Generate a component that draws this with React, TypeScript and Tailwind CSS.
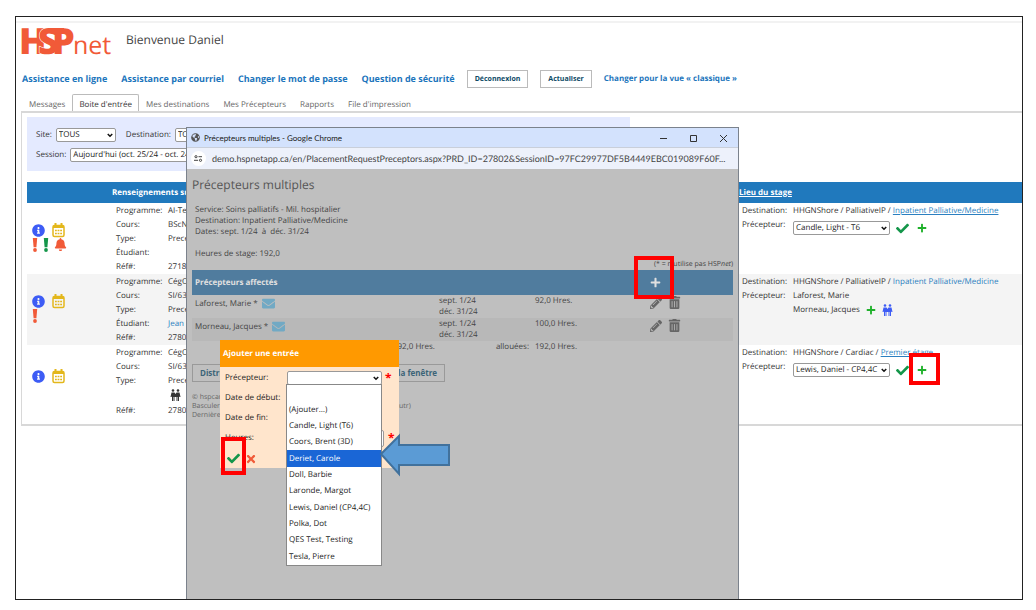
import React from 'react';
import { FaCheck, FaPlus, FaEnvelope, FaBell, FaTimes, FaInfoCircle, FaPencilAlt, FaTrashAlt, FaGlobeAmericas } from 'react-icons/fa';

const OPTIONS = [
  '',
  '(Ajouter…)',
  'Candle, Light (T6)',
  'Coors, Brent (3D)',
  'Deriet, Carole',
  'Doll, Barbie',
  'Laronde, Margot',
  'Lewis, Daniel (CP4,4C)',
  'Polka, Dot',
  'QES Test, Testing',
  'Tesla, Pierre',
];

const Logo = () => (
  <svg width="92" height="32" viewBox="0 0 92 32" role="img" aria-label="HSPnet" fill="#f15a38" className="shrink-0 overflow-visible">
    <g fontFamily="Open Sans, sans-serif" fontWeight="800" fontSize="36">
      <text x="-3" y="28">H</text>
      <text x="16" y="28" stroke="#fff" strokeWidth="1" paintOrder="stroke">S</text>
      <text x="30" y="28">P</text>
    </g>
    <rect x="26" y="2" width="16" height="5" />
    <text x="51" y="28" fontFamily="Open Sans, sans-serif" fontSize="25">net</text>
  </svg>
);

const People = ({ className = '' }: { className?: string }) => (
  <svg viewBox="0 0 20 24" className={className} fill="currentColor" aria-hidden="true">
    <circle cx="5" cy="3" r="2.6" />
    <circle cx="15" cy="3" r="2.6" />
    <path d="M2 7h6l2 3 2-3h6l2 9h-2.4l-.6-3v11h-2v-8h-1v8h-2v-8h-4v8H6v-8H5v8H3V13l-.6 3H0z" />
  </svg>
);

const Calendar = () => (
  <svg width="13" height="15" viewBox="0 0 13 15" fill="none" stroke="#e3b71b" aria-hidden="true">
    <rect x="1" y="2.5" width="11" height="11" rx="1.5" strokeWidth="1.5" />
    <path d="M3.5 0v3M9.5 0v3" strokeWidth="2" />
    <path d="M1 4h11" strokeWidth="2" />
    <path d="M3 7.5h7M3 10.5h7" strokeWidth="1.5" strokeDasharray="1.8 .8" />
  </svg>
);

const Exclaim = ({ className }: { className: string }) => (
  <svg width="6" height="14" viewBox="0 0 6 14" fill="currentColor" className={className} aria-hidden="true">
    <path d="M.8 0h4.4l-.8 9.2H1.6z" />
    <circle cx="3" cy="12" r="1.9" />
  </svg>
);

const Select = ({ id, label, value, className = '', hideLabel = false }: { id: string; label: string; value: string; className?: string; hideLabel?: boolean }) => (
  <>
    {!hideLabel && <label htmlFor={id} className="shrink-0">{label}</label>}
    <span className={`relative inline-block shrink-0 ${className}`}>
      <select id={id} aria-label={label} defaultValue={value} className="block h-[14px] w-full appearance-none rounded-xs border border-[#999] bg-white pl-[2px] text-[8px] leading-[12px] text-[#222] [text-rendering:geometricPrecision]">
        <option>{value}</option>
      </select>
      <svg viewBox="0 0 8 6" className="pointer-events-none absolute top-[5px] right-[3px] h-[5px] w-[6px]" fill="none" stroke="#111" strokeWidth="2">
        <path d="M1 1l3 3 3-3" />
      </svg>
    </span>
  </>
);

const InfoCell = ({ programme, cours, etudiant, refNo, people }: { programme: string; cours: string; etudiant?: string; refNo: string; people?: boolean }) => (
  <dl className="grid grid-cols-[52px_1fr] pt-px pl-1 leading-[14px]">
    <dt>Programme:</dt><dd>{programme}</dd>
    <dt>Cours:</dt><dd>{cours}</dd>
    <dt>Type:</dt><dd>Preceptorat</dd>
    {people ? (
      <dt className="col-span-2 h-4 pt-px pl-[54px]"><People className="h-3 w-[11px] text-[#333]" /></dt>
    ) : (
      <><dt>Étudiant:</dt><dd className="text-[#2b7fc0]">{etudiant}</dd></>
    )}
    <dt>Réf#:</dt><dd>{refNo}</dd>
  </dl>
);

const PlaceLine = ({ path, link, underline }: { path: string; link: string; underline?: boolean }) => (
  <>
    <span>Destination:</span>
    <span className="whitespace-nowrap">{path} <a href="#dest" className={`text-[#2b7fc0] ${underline ? 'underline' : ''}`}>{link}</a></span>
  </>
);

const PreceptorSelect = ({ id, value }: { id: string; value: string }) => (
  <div className="flex items-center gap-[6px] pt-[3px]">
    <Select id={id} label="Précepteur" value={value} className="w-[97px]" hideLabel />
    <button aria-label="Confirmer"><FaCheck className="size-[13px] text-[#14964a]" /></button>
    <button aria-label="Ajouter" className="pl-[2px]"><FaPlus className="size-[10px] text-[#1fb12b]" /></button>
  </div>
);

const LINKS = ['Assistance en ligne', 'Assistance par courriel', 'Changer le mot de passe', 'Question de sécurité'];
const TABS = ['Messages', "Boite d'entrée", 'Mes destinations', 'Mes Précepteurs', 'Rapports', "File d'impression"];

const Inbox = () => (
  <table className="mt-[11px] w-full table-fixed border-collapse text-left">
    <colgroup>
      <col className="w-[85px]" />
      <col />
      <col className="w-[283px]" />
    </colgroup>
    <thead>
      <tr className="h-[21px] bg-[#2079bd] text-white">
        <th aria-label="État" />
        <th className="font-bold">Renseignements sur le stage</th>
        <th className="font-bold underline">Lieu du stage</th>
      </tr>
    </thead>
    <tbody className="align-top">
      <tr className="h-[71px]">
        <td className="pt-5 pl-[5px]">
          <div className="flex items-center gap-[7px]"><FaInfoCircle className="size-[13px] text-[#3d5cf5]" /><Calendar /></div>
          <div className="flex gap-[5px]"><Exclaim className="text-[#f15a38]" /><Exclaim className="text-[#14964a]" /><FaBell className="size-[13px] text-[#f15a38]" /></div>
        </td>
        <td><InfoCell programme="AI-Test" cours="BScN 400" refNo="27180" /></td>
        <td>
          <div className="grid grid-cols-[51px_1fr] pt-px pl-[3px] leading-[14px]">
            <PlaceLine path="HHGNShore / PalliativeIP /" link="Inpatient Palliative/Medicine" underline />
            <span>Précepteur:</span>
            <PreceptorSelect id="prec-1" value="Candle, Light - T6" />
          </div>
        </td>
      </tr>
      <tr className="h-[71px] bg-[#f4f4f4]">
        <td className="pt-5 pl-[5px]">
          <div className="flex items-center gap-[7px]"><FaInfoCircle className="size-[13px] text-[#3d5cf5]" /><Calendar /></div>
          <Exclaim className="text-[#f15a38]" />
        </td>
        <td><InfoCell programme="CégOutaouais" cours="SI/63A" etudiant="Jean Untel" refNo="27802" /></td>
        <td>
          <div className="grid grid-cols-[51px_1fr] pt-px pl-[3px] leading-[14px]">
            <PlaceLine path="HHGNShore / PalliativeIP /" link="Inpatient Palliative/Medicine" />
            <span>Précepteur:</span><span>Laforest, Marie</span>
            <div className="col-start-2 flex items-center gap-[6px]">
              Morneau, Jacques
              <button aria-label="Ajouter"><FaPlus className="size-[10px] text-[#1fb12b]" /></button>
              <People className="h-3 w-[11px] text-[#3d5cf5]" />
            </div>
          </div>
        </td>
      </tr>
      <tr className="h-[71px]">
        <td className="pt-6 pl-[5px]">
          <div className="flex items-center gap-[7px]"><FaInfoCircle className="size-[13px] text-[#3d5cf5]" /><Calendar /></div>
        </td>
        <td><InfoCell programme="CégOutaouais" cours="SI/63A" refNo="27803" people /></td>
        <td>
          <div className="grid grid-cols-[51px_1fr] pt-px pl-[3px] leading-[14px]">
            <PlaceLine path="HHGNShore / Cardiac /" link="Premier étage" underline />
            <span>Précepteur:</span>
            <PreceptorSelect id="prec-3" value="Lewis, Daniel - CP4,4C" />
          </div>
        </td>
      </tr>
    </tbody>
  </table>
);

const AddEntry = () => (
  <form className="absolute top-[171px] left-[33px] h-[128px] w-[179px] bg-[#ffe5cc] text-[#222]">
    <h2 className="bg-[#ff9900] pl-[3px] font-bold leading-[27px] text-white">Ajouter une entrée</h2>
    <div className="grid grid-cols-[62px_1fr] items-center pt-px pl-[5px] leading-[20px]">
      <label htmlFor="add-prec">Précepteur:</label>
      <div className="flex items-center gap-[3px]">
        <Select id="add-prec" label="Précepteur" value="" className="w-[95px]" hideLabel />
        <span className="text-xs font-bold text-[#f00]">*</span>
      </div>
      <span className="col-span-2">Date de début:</span>
      <span className="col-span-2">Date de fin:</span>
      <label htmlFor="add-hours">Heures:</label>
      <div className="flex items-center gap-[4px]">
        <input id="add-hours" className="h-[17px] w-[97px] rounded-xs border border-[#999] bg-white" />
        <span className="text-xs font-bold text-[#f00]">*</span>
      </div>
    </div>
    <div className="flex items-center gap-[5px] pt-1 pl-[7px]">
      <button type="button" aria-label="Confirmer"><FaCheck className="size-[13px] text-[#14964a]" /></button>
      <button type="button" aria-label="Annuler"><FaTimes className="size-[12px] text-[#f15a38]" /></button>
    </div>
    <ul role="listbox" aria-label="Précepteur" className="absolute top-[44px] left-[66px] flex h-[182px] w-[96px] flex-col border border-[#888] bg-white">
      {OPTIONS.map(name => (
        <li
          key={name}
          role="option"
          aria-selected={name === 'Deriet, Carole'}
          className="flex flex-1 items-center pl-[2px] whitespace-nowrap aria-selected:bg-[#1a66d6] aria-selected:text-white"
        >
          {name}
        </li>
      ))}
    </ul>
  </form>
);

const ROWS = [
  { name: 'Laforest, Marie *', hours: '92,0 Hres.' },
  { name: 'Morneau, Jacques *', hours: '100,0 Hres.' },
];

const Popup = () => (
  <section className="absolute top-[110px] bottom-0 left-[170px] flex w-[553px] flex-col border border-b-0 border-[#7b828c] bg-[#bfbfbf]">
    <header className="flex h-5 shrink-0 items-center border-b border-[#c9cfda] bg-[#d3e2fd] pl-1">
      <FaGlobeAmericas className="mr-1 size-[9px] text-[#555]" />
      <span className="flex-1 font-[Lato,sans-serif] text-[8px] text-[#222]">Précepteurs multiples - Google Chrome</span>
      <svg width="80" height="10" viewBox="0 0 80 10" fill="none" stroke="#333" className="mr-[5px]" aria-hidden="true">
        <path d="M7 5.5h7M37.500 2.500h6v6h-6zM67 2l7 7M74 2l-7 7" />
      </svg>
    </header>
    <div className="flex h-[21px] shrink-0 items-center gap-[6px] bg-[#edf1fb] pl-1 text-[#444]">
      <span className="flex size-[15px] items-center justify-center rounded-full bg-white">
        <svg width="9" height="7" viewBox="0 0 9 7" fill="none" stroke="#444" aria-hidden="true">
          <circle cx="2" cy="1.700" r="1.100" /><path d="M4.500 1.700h3.500M0 5.300h4" /><circle cx="6.500" cy="5.300" r="1.100" />
        </svg>
      </span>
      <span className="font-[Lato,sans-serif] text-[9px] whitespace-nowrap">demo.hspnetapp.ca/en/PlacementRequestPreceptors.aspx?PRD_ID=27802&amp;SessionID=97FC29977DF5B4449EBC019089F60F...</span>
    </div>
    <div className="relative flex-1 pt-[7px] pr-[5px] pl-[5px] text-[#444]">
      <h1 className="text-xs leading-[18px] text-[#555]">Précepteurs multiples</h1>
      <div className="pt-[10px] pl-[3px] leading-[11px]">
        <p>Service: Soins palliatifs - Mil. hospitalier</p>
        <p>Destination: Inpatient Palliative/Medicine</p>
        <p className="whitespace-pre">Dates: sept. 1/24  à  déc. 31/24</p>
        <p className="pt-[11px]">Heures de stage: 192,0</p>
      </div>
      <p className="text-right text-[7px] leading-[11px]">(* = n'utilise pas HSP<i>net</i>)</p>
      <table className="w-full table-fixed border-collapse text-left">
        <colgroup>
          <col />
          <col className="w-[96px]" />
          <col className="w-[112px]" />
          <col className="w-[86px]" />
        </colgroup>
        <thead>
          <tr className="h-[25px] bg-[#507c9e] text-[#e0e0e0]">
            <th colSpan={3} className="pl-[3px] font-bold">Précepteurs affectés</th>
            <th className="pl-[3px]"><button aria-label="Ajouter" className="block"><FaPlus className="size-[11px]" /></button></th>
          </tr>
        </thead>
        <tbody className="align-top leading-[11px]">
          {ROWS.map(row => (
            <tr key={row.name} className="h-[23px] even:bg-[#b8b8b8]">
              <td className="pt-[2px] pl-[3px]">
                <span className="flex items-center gap-1">{row.name} <FaEnvelope className="size-[13px] text-[#71a9c4]" /></span>
              </td>
              <td>sept. 1/24<br />déc. 31/24</td>
              <td>{row.hours}</td>
              <td className="pt-px">
                <span className="flex gap-[6px] pl-[3px] text-[#666]">
                  <button aria-label="Modifier"><FaPencilAlt className="size-[12px]" /></button>
                  <button aria-label="Supprimer"><FaTrashAlt className="size-[13px]" /></button>
                </span>
              </td>
            </tr>
          ))}
          <tr>
            <td className="pr-1 text-right">192,0 Hres.</td>
            <td className="pr-[6px] text-right">allouées:</td>
            <td>192,0 Hres.</td>
            <td />
          </tr>
        </tbody>
      </table>
      <div className="flex gap-2 pt-3 font-bold text-[#3c6478]">
        <button className="h-[18px] w-[159px] border border-[#999] px-[7px] text-left">Distribuer les heures restantes</button>
        <button className="h-[18px] border border-[#999] px-[7px]">Fermer la fenêtre</button>
      </div>
      <div className="pt-[11px] text-[7px] leading-[9px] text-[#666]">
        <p>© hspcanada.net</p>
        <p>Basculer vers une autre langue pour cette page (anglais ou un autr)</p>
        <p>Dernière mise à jour</p>
      </div>
      <AddEntry />
    </div>
  </section>
);

export default function App() {
  return (
    <div className="flex h-screen min-h-[610px] bg-white pt-4 pr-[13px] pb-[10px] pl-[15px] font-['Open_Sans',sans-serif] text-[8px] text-[#333] [text-rendering:geometricPrecision]">
      <main className="relative flex-1 overflow-hidden border border-[#222]">
        <div className="mt-1 h-[2px] bg-[#f2f2f2]" />
        <header className="flex items-start gap-3 pt-[3px] pl-[6px]">
          <Logo />
          <span className="pt-[6px] text-xs leading-[16px] text-[#444]">Bienvenue Daniel</span>
        </header>
        <nav className="flex items-center gap-3 pt-3 pl-[6px] font-bold text-[#1c75bc]">
          <div className="flex gap-[14px] text-[9px]">
            {LINKS.map(link => <a key={link} href="#aide">{link}</a>)}
          </div>
          <button className="h-[18px] border border-[#bbb] px-[7px] text-[7px] text-[#0d4a66]">Déconnexion</button>
          <button className="h-[18px] border border-[#bbb] px-[7px] text-[7px] text-[#0d4a66]">Actualiser</button>
          <a href="#classique">Changer pour la vue « classique »</a>
        </nav>
        <nav className="flex pt-[6px] pl-[6px] text-[#666]">
          {TABS.map((tab, i) => (
            <a
              key={tab}
              href="#tab"
              aria-current={i === 1 ? 'page' : undefined}
              className="h-[17px] rounded-t-xs border border-b-0 border-transparent px-[6px] leading-[20px] aria-[current=page]:border-[#bbb] aria-[current=page]:text-[#333]"
            >
              {tab}
            </a>
          ))}
        </nav>
        <div className="ml-[5px] h-[315px] border-t-2 border-b-2 border-l border-[#d8d8d8] pt-1 pl-[5px]">
          <div className="flex h-[54px] w-[603px] flex-col gap-[6px] bg-[#e4eaff] pt-[11px] pl-[9px]">
            <div className="flex items-center gap-[4px]">
              <Select id="site" label="Site:" value="TOUS" className="mr-[6px] w-[60px]" />
              <Select id="dest" label="Destination:" value="TOUS" className="w-[120px]" />
            </div>
            <div className="flex items-center gap-[4px]">
              <Select id="session" label="Session:" value="Aujourd'hui (oct. 25/24 - oct. 24/25)" className="w-[200px]" />
            </div>
          </div>
          <Inbox />
        </div>
        <Popup />

        {/* callouts */}
        <div className="absolute top-[239px] left-[618px] h-[43px] w-10 border-4 border-[#f00]" />
        <div className="absolute top-[420px] left-[205px] h-[38px] w-[25px] border-4 border-[#f00]" />
        <div className="absolute top-[336px] left-[893px] h-8 w-[31px] border-4 border-[#f00]" />
        <svg width="72" height="44" viewBox="0 0 72 44" className="absolute top-[416px] left-[363px]" fill="#5b9bd5" stroke="#41719c" strokeWidth="2" aria-hidden="true">
          <path d="M2 21L20 3v9h50v20H20v9z" />
        </svg>
      </main>
    </div>
  );
}
